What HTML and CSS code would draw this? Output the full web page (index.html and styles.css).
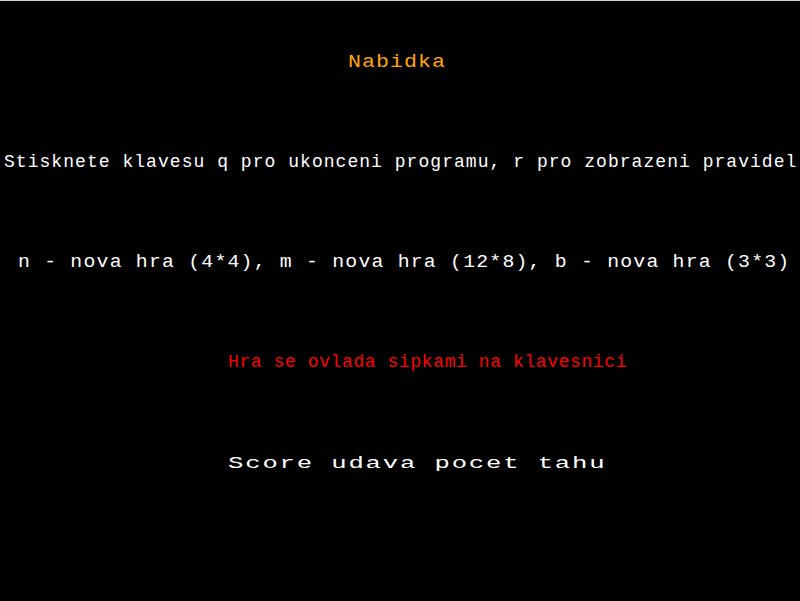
FILE: index.html
```html
<!DOCTYPE html>
<html>
<head>
<meta charset="utf-8">
<link rel="stylesheet" href="styles.css">
</head>
<body>
<main class="screen">
  <div class="row row-title"><span class="txt">Nabidka</span></div>
  <div class="row row-keys"><span class="txt">Stisknete klavesu q pro ukonceni programu, r pro zobrazeni pravidel</span></div>
  <div class="row row-new"><span class="txt">n - nova hra (4*4), m - nova hra (12*8), b - nova hra (3*3)</span></div>
  <div class="row row-ctrl"><span class="txt">Hra se ovlada sipkami na klavesnici</span></div>
  <div class="row row-score"><span class="txt">Score udava pocet tahu</span></div>
</main>
</body>
</html>
```

FILE: styles.css
```css
html, body {
  margin: 0;
  padding: 0;
  background: #000;
}
.screen {
  width: 800px;
  height: 601px;
  box-sizing: border-box;
  border-top: 1px solid #d4d4d4;
  background: #000;
  padding-top: 51px;
  display: flex;
  flex-direction: column;
  overflow: hidden;
  font-family: "Liberation Mono", "DejaVu Sans Mono", monospace;
  font-size: 18px;
  line-height: 20px;
  color: #fff;
}
.row {
  height: 100px;
  white-space: pre;
}
.txt {
  display: inline-block;
  transform-origin: left top;
}
.row-title .txt {
  color: #ffa500;
  margin-left: 348px;
  transform: scaleX(1.2);
  letter-spacing: 0.87px;
}
.row-keys .txt {
  margin-left: 4px;
  letter-spacing: 1.04px;
}
.row-new .txt {
  margin-left: 18px;
  transform: scaleX(1.1);
  letter-spacing: 1.1px;
}
.row-ctrl .txt {
  color: #ff0000;
  margin-left: 228px;
  letter-spacing: 0.6px;
}
.row-score .txt {
  font-size: 16px;
  margin-left: 228px;
  margin-top: 2px;
  transform: scaleX(1.6);
  letter-spacing: 1.15px;
}
```
